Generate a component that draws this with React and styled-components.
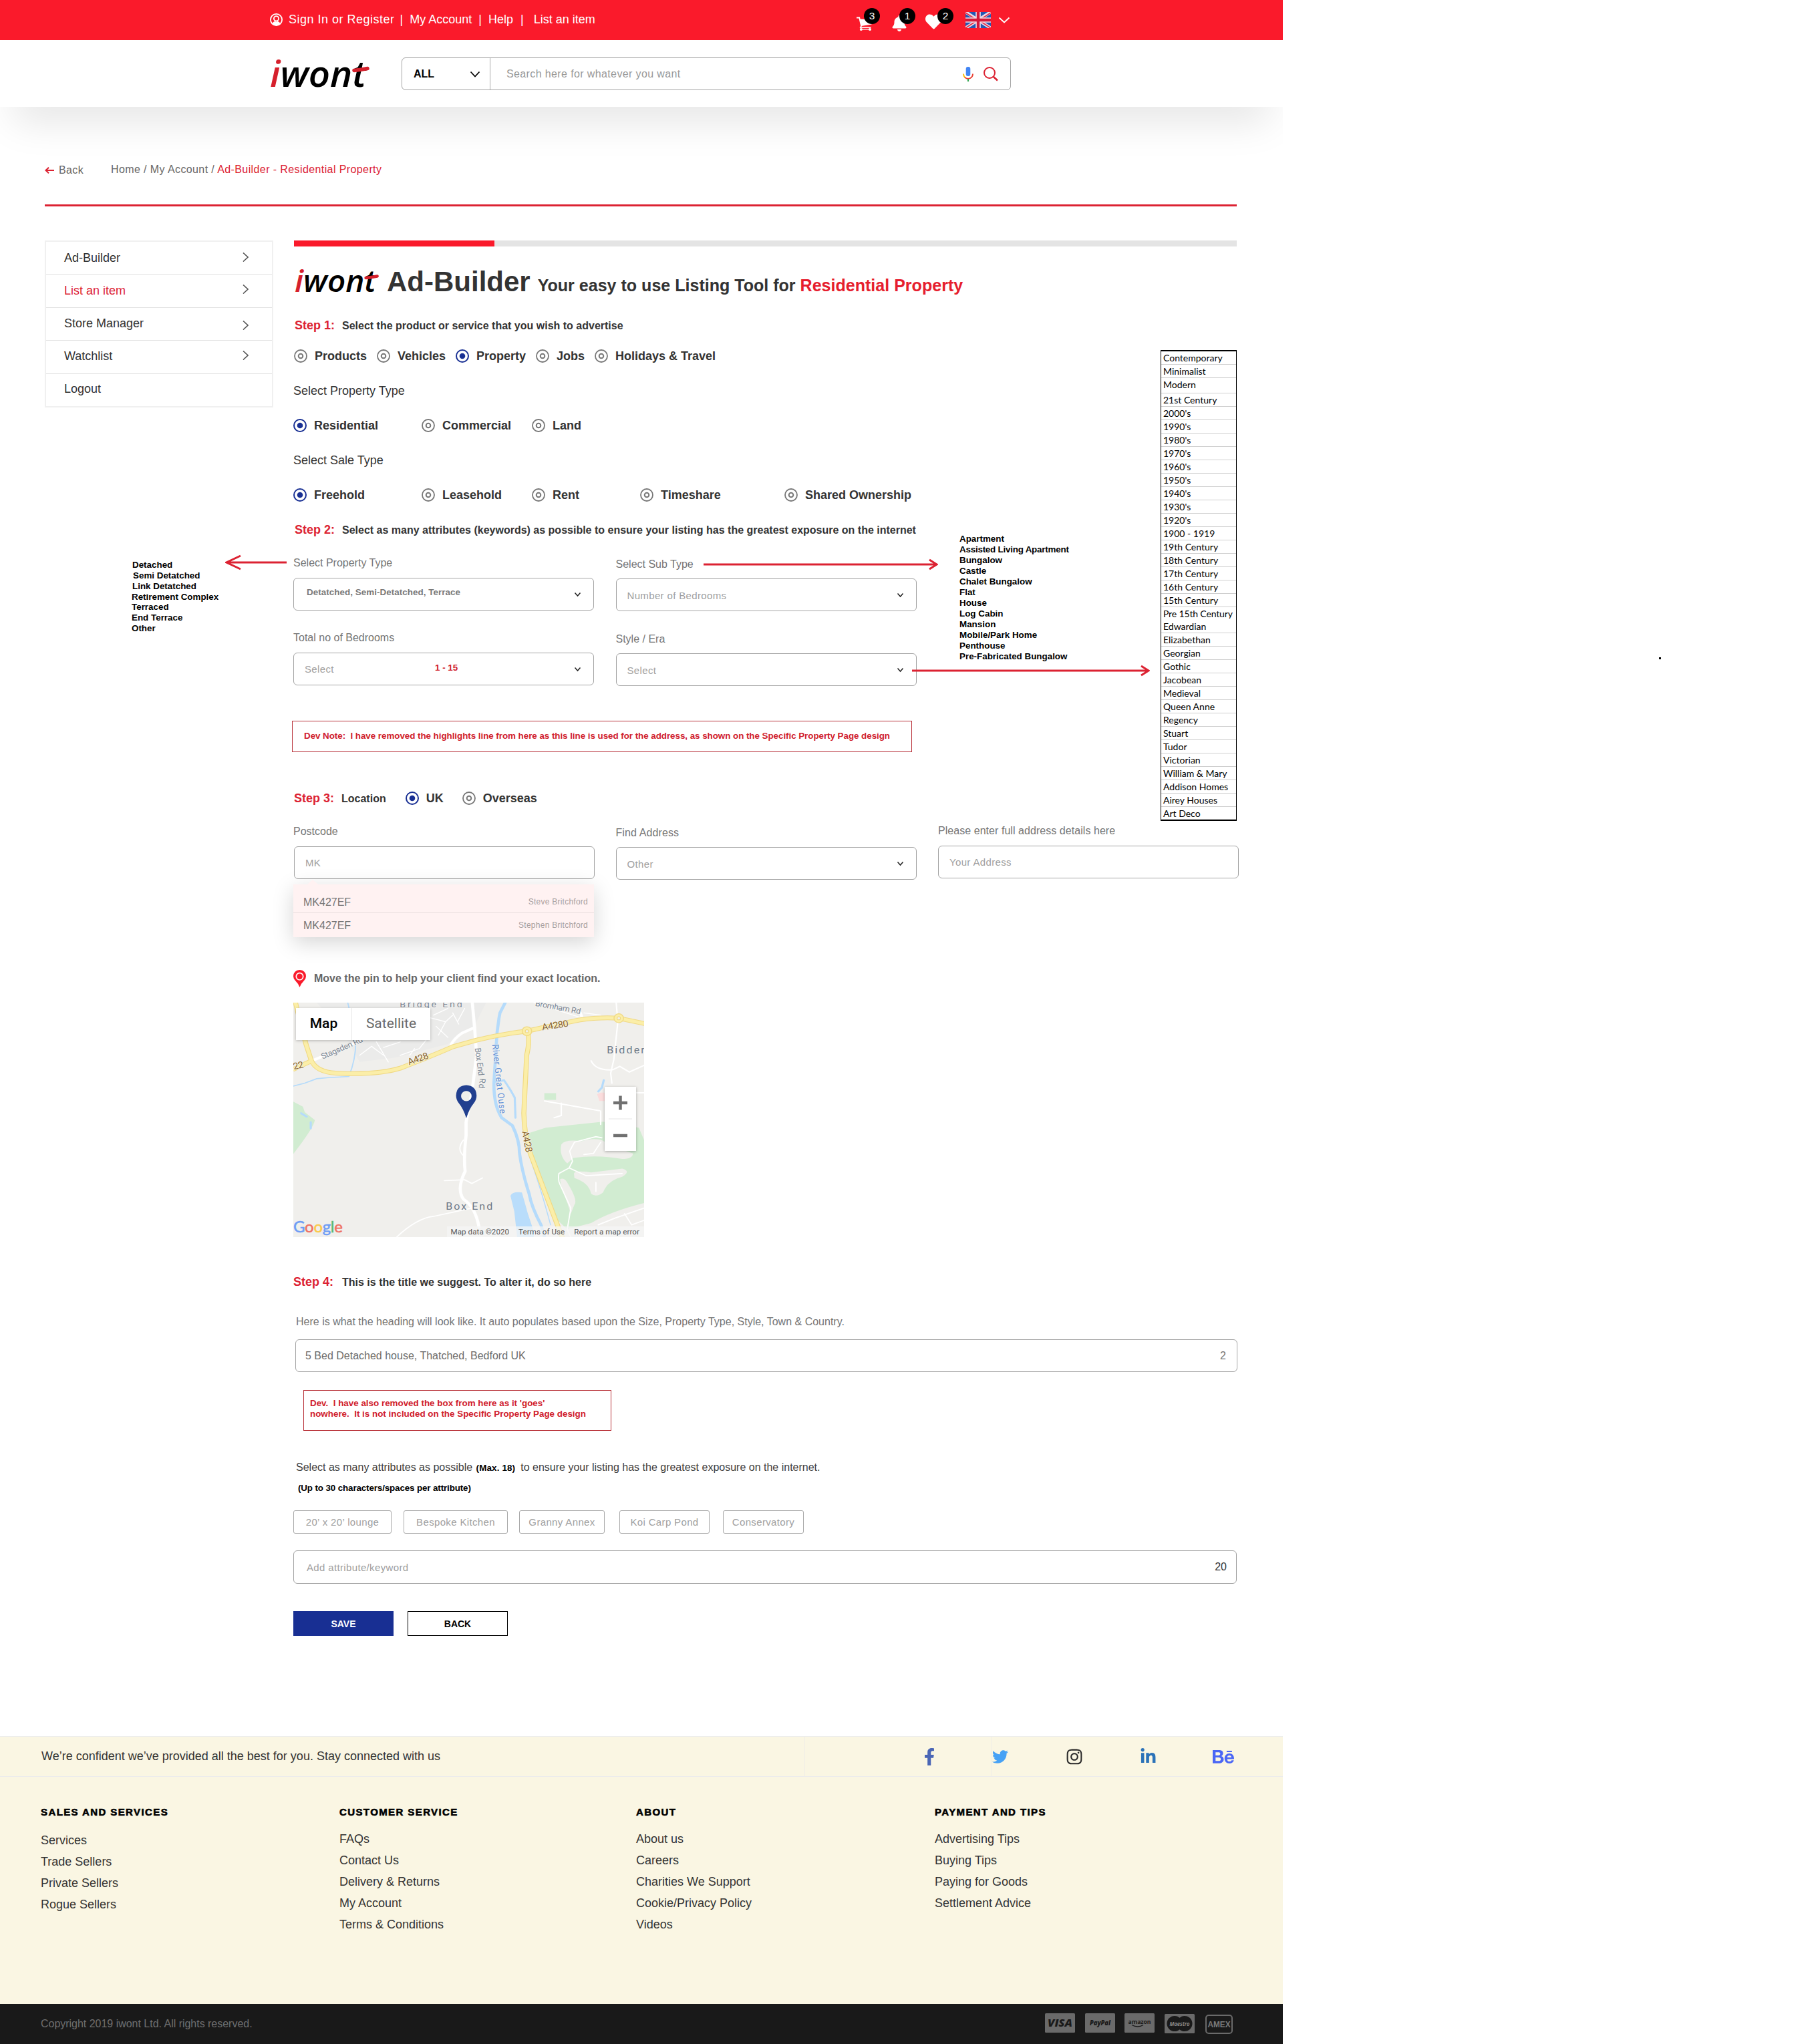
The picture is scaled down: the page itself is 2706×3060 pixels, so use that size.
import React from "react";
import styled, { createGlobalStyle, css } from "styled-components";
import {
  FaBell,
  FaHeart,
  FaFacebookF,
  FaTwitter,
  FaInstagram,
  FaLinkedinIn,
  FaBehance,
} from "react-icons/fa";

const RED = "#dc2232";
const NAVY = "#182f93";

const GlobalStyle = createGlobalStyle`
  * { box-sizing: border-box; }
  body { margin: 0; background: #fff; font-family: "Liberation Sans", Arial, sans-serif; color: #333; }
  h1, h3, p, ul { margin: 0; padding: 0; font-weight: inherit; }
  ul { list-style: none; }
  svg { display: block; flex: none; }
`;

const Canvas = styled.div`
  position: relative;
  width: 2706px;
  height: 3060px;
  overflow: hidden;
`;

const Page = styled.div`
  width: 1920px;
  height: 3060px;
  display: flex;
  flex-direction: column;
  overflow: hidden;
`;

/* ---------- header ---------- */

const TopBar = styled.div`
  height: 60px;
  flex: none;
  padding: 0 409px 0 404px;
  background: #fa1a2b;
  color: #fff;
  font-size: 18px;
  display: flex;
  align-items: center;
`;

const TopLink = styled.span`
  margin-left: ${(p) => p.$gap}px;
  padding-bottom: 2px;
  letter-spacing: ${(p) => p.$track || 0}px;
  white-space: pre;
`;

const UserSlot = styled.span`
  padding-bottom: 2px;
`;

const TopIcons = styled.div`
  margin-left: auto;
  height: 60px;
  display: flex;
  align-items: flex-start;
`;

const IconSlot = styled.div`
  position: relative;
  width: ${(p) => p.$w}px;
  padding-top: ${(p) => p.$top}px;
`;

const Badge = styled.span`
  position: absolute;
  top: 12px;
  left: ${(p) => p.$left}px;
  width: 24px;
  height: 24px;
  border-radius: 50%;
  background: #000;
  color: #fff;
  font-size: 15.5px;
  line-height: 23px;
  text-align: center;
`;

const SearchBar = styled.div`
  height: 100px;
  flex: none;
  padding-left: 402px;
  background: #fff;
  display: flex;
  align-items: flex-start;
  box-shadow: 0 40px 60px -20px rgba(0, 0, 0, 0.115);
`;

const LogoSlot = styled.div`
  width: 199px;
  padding-top: 10px;
`;

const SearchBox = styled.div`
  margin-top: 26px;
  width: 912px;
  height: 49px;
  border: 1px solid #a3a3a3;
  border-radius: 6px;
  display: flex;
  align-items: center;
`;

const SearchScope = styled.div`
  width: 132px;
  height: 100%;
  padding: 0 15px 0 17px;
  border-right: 1px solid #a9a9a9;
  display: flex;
  align-items: center;
  justify-content: space-between;
  font-size: 16px;
  font-weight: bold;
  color: #000;
`;

const SearchHint = styled.span`
  flex: 1;
  padding-left: 24px;
  font-size: 16px;
  letter-spacing: 0.38px;
  color: #999;
`;

const SearchActions = styled.div`
  display: flex;
  align-items: center;
  gap: 15px;
  padding-right: 18px;
`;

/* ---------- breadcrumb ---------- */

const Crumbs = styled.nav`
  margin: 84px 69px 0 67px;
  height: 65px;
  flex: none;
  border-bottom: 3px solid ${RED};
  display: flex;
  align-items: flex-start;
  font-size: 16px;
  line-height: 20px;
  letter-spacing: 0.4px;
  color: #666;
`;

const BackLink = styled.span`
  width: 99px;
  display: flex;
  align-items: center;
  gap: 7px;
  padding-top: 1px;
`;

const Current = styled.span`
  color: ${RED};
`;

/* ---------- body ---------- */

const Body = styled.div`
  margin: 51px 0 0 67px;
  height: 2239px;
  flex: none;
  display: flex;
  gap: 30px;
`;

const Side = styled.aside`
  width: 342px;
  flex: none;
`;

const Menu = styled.ul`
  border: 2px solid #f0f0f0;
  height: 250px;
`;

const MenuItem = styled.li`
  height: ${(p) => p.$h}px;
  border-bottom: ${(p) => (p.$last ? "none" : "1px solid #e2e2e2")};
  padding: ${(p) => p.$pt}px 35px 0 27px;
  display: flex;
  justify-content: space-between;
  align-items: flex-start;
  font-size: 18px;
  line-height: 22px;
  color: ${(p) => (p.$active ? RED : "#333")};
`;

const MenuChevron = styled.span`
  padding-top: ${(p) => p.$pt}px;
`;

const PaintList = styled.ul`
  margin: ${(p) => p.$mt}px 0 0 ${(p) => p.$ml}px;
  font-size: 13.4px;
  font-weight: bold;
  line-height: 16px;
  color: #000;
  white-space: nowrap;
`;

const PaintItem = styled.li`
  padding-left: ${(p) => p.$indent || 0}px;
  height: ${(p) => p.$h || 16}px;
  letter-spacing: ${(p) => p.$track || 0}px;
`;

const Main = styled.main`
  position: relative;
  width: 1415px;
`;

const Progress = styled.div`
  width: 1411px;
  margin-left: 1px;
  height: 9px;
  background: #e4e4e4;
`;

const ProgressFill = styled.div`
  width: 300px;
  height: 9px;
  background: #fa1a2b;
`;

const TitleRow = styled.div`
  margin: 20px 0 0 0;
  height: 65px;
  display: flex;
  align-items: center;
`;

const TitleLogo = styled.div`
  width: 140px;
  padding-bottom: 6px;
`;

const Title = styled.h1`
  font-size: 42px;
  line-height: 65px;
  font-weight: bold;
  white-space: pre;
`;

const Tagline = styled.span`
  font-size: 25.05px;
  line-height: 1;
  margin-left: 11px;
`;

const RedText = styled.span`
  color: #e61e2e;
`;

const StepLine = styled.div`
  margin-top: ${(p) => p.$mt || 0}px;
  margin-left: ${(p) => p.$ml || 0}px;
  height: 26px;
  display: flex;
  align-items: baseline;
  font-size: 18px;
  line-height: 26px;
  font-weight: bold;
  white-space: nowrap;
  color: ${RED};
`;

const StepText = styled.span`
  margin-left: ${(p) => p.$ml || 11}px;
  font-size: 16px;
  color: #333;
`;

const LocationStep = styled.div`
  margin: 56px 0 0 1px;
  display: flex;
`;

const Annotated = styled.div`
  display: flex;
  align-items: flex-start;
  width: 1412px;
  margin-top: 20px;
  height: 709px;
`;

const FormCol = styled.div`
  width: 933px;
  flex: none;
`;

const RadioRow = styled.div`
  margin-top: ${(p) => p.$mt || 0}px;
  margin-left: ${(p) => p.$ml || 0}px;
  height: 26px;
  display: flex;
  align-items: center;
`;

const RadioLabel = styled.label`
  width: ${(p) => (p.$w ? p.$w + "px" : "auto")};
  display: flex;
  align-items: center;
  gap: 11px;
  font-size: 18px;
  line-height: 26px;
  font-weight: bold;
  white-space: nowrap;
`;

const GroupLabel = styled.p`
  margin-top: 26px;
  font-size: 18px;
  line-height: 26px;
`;

const Fields = styled.div`
  margin-top: ${(p) => p.$mt}px;
  display: grid;
  grid-template-columns: repeat(${(p) => p.$cols}, 450px);
  column-gap: 32.5px;
`;

const Field = styled.div`
  position: relative;
  padding-top: ${(p) => p.$drop || 0}px;
  margin-top: ${(p) => p.$lift || 0}px;
`;

const FieldLabel = styled.p`
  font-size: 16px;
  line-height: 20px;
  color: #757575;
  letter-spacing: ${(p) => p.$track || 0}px;
`;

const Control = styled.div`
  position: relative;
  margin-top: ${(p) => p.$mt ?? 12}px;
  margin-left: ${(p) => p.$ml || 0}px;
  width: ${(p) => (p.$w ? p.$w + "px" : "auto")};
  height: ${(p) => p.$h || 49}px;
  padding: 0 ${(p) => p.$pr || 19}px 0 ${(p) => p.$pl || 16}px;
  border: 1px solid #a3a3a3;
  border-radius: 6px;
  display: flex;
  align-items: center;
  justify-content: space-between;
`;

const Hint = styled.span`
  font-size: 15px;
  letter-spacing: 0.35px;
  color: #a0a0a0;
  padding-top: ${(p) => p.$pt || 0}px;
`;

const Chosen = styled.span`
  font-size: 13.4px;
  font-weight: bold;
  letter-spacing: 0.05px;
  color: #7a7a7a;
  padding: 0 0 7px 3px;
`;

const RangeNote = styled.span`
  position: absolute;
  left: 211px;
  top: 14px;
  font-size: 13.4px;
  font-weight: bold;
  line-height: 16px;
  color: #d0202c;
`;

const DevNote = styled.div`
  margin: ${(p) => p.$mt}px 0 0 ${(p) => p.$ml}px;
  width: ${(p) => p.$w}px;
  height: ${(p) => p.$h}px;
  padding: ${(p) => p.$pad};
  border: 1px solid #b83038;
  font-size: 13.4px;
  font-weight: bold;
  line-height: 16px;
  letter-spacing: ${(p) => p.$track || 0}px;
  color: #d0202c;
  white-space: pre;
`;

const EraTable = styled.ul`
  margin: 4px 0 0 auto;
  width: 114px;
  border: 2px solid #000;
  border-width: 2px 1px 2px 1px;
  font-family: Lato, "Noto Sans", sans-serif;
  font-size: 14px;
  color: #000;
  white-space: nowrap;
`;

const EraRow = styled.li`
  height: ${(p) => p.$h}px;
  padding: 1px 0 0 3px;
  line-height: 18px;
  letter-spacing: ${(p) => (p.$plain ? -0.15 : 0)}px;
  ${(p) =>
    !p.$plain &&
    css`
      border-bottom: 1px solid #cfcfcf;
    `}
`;

const ArrowSvg = styled.svg`
  position: absolute;
  left: ${(p) => p.$x}px;
  top: ${(p) => p.$y}px;
`;

const Suggestions = styled.ul`
  position: absolute;
  top: 89px;
  left: 0;
  width: 450px;
  height: 79px;
  background: #fff2f2;
  box-shadow: 0 8px 32px rgba(0, 0, 0, 0.17);
  &::before {
    content: "";
    position: absolute;
    left: 21px;
    top: -7px;
    border: 8px solid transparent;
    border-top: 0;
    border-bottom: 7px solid #fff2f2;
  }
`;

const Suggestion = styled.li`
  height: ${(p) => p.$h}px;
  padding: ${(p) => p.$pt}px 9px 0 15px;
  border-bottom: ${(p) => (p.$line ? "1px solid #eadede" : "none")};
  display: flex;
  justify-content: space-between;
  font-size: 16px;
  line-height: 20px;
  color: #757575;
`;

const Owner = styled.span`
  font-size: 12px;
  letter-spacing: 0.25px;
  line-height: 19px;
  color: #a8a0a0;
`;

const PinRow = styled.div`
  margin-top: 135px;
  height: 26px;
  display: flex;
  align-items: center;
  gap: 12px;
  font-size: 16px;
  font-weight: bold;
  color: #666;
`;

const MapFrame = styled.div`
  position: relative;
  margin-top: 23px;
  width: 525px;
  height: 351px;
  overflow: hidden;
  font-family: Roboto, sans-serif;
`;

const MapTabs = styled.div`
  position: absolute;
  left: 4px;
  top: 8px;
  height: 48px;
  display: flex;
  background: #fff;
  box-shadow: 0 1px 4px rgba(0, 0, 0, 0.25);
`;

const MapTab = styled.span`
  width: ${(p) => p.$w}px;
  text-align: center;
  font-size: 21px;
  line-height: 47px;
  font-weight: ${(p) => (p.$on ? 500 : 400)};
  color: ${(p) => (p.$on ? "#000" : "#6a6a6a")};
  border-left: ${(p) => (p.$on ? "none" : "1px solid #e8e8e8")};
`;

const ZoomBox = styled.div`
  position: absolute;
  left: 466px;
  top: 126px;
  width: 47px;
  height: 96px;
  background: #fff;
  box-shadow: 0 1px 4px rgba(0, 0, 0, 0.3);
`;

const MapCredits = styled.div`
  position: absolute;
  right: 0;
  bottom: 0;
  height: 16px;
  padding: 0 7px 0 6px;
  display: flex;
  gap: 14px;
  background: rgba(245, 245, 245, 0.75);
  font-size: 11.6px;
  line-height: 16px;
  letter-spacing: 0.05px;
  color: #555;
  white-space: nowrap;
`;

const GoogleMark = styled.div`
  position: absolute;
  left: 0;
  bottom: 1px;
  font-family: Lato, sans-serif;
  font-size: 24px;
  line-height: 30px;
  letter-spacing: -0.3px;
`;

const GoogleLetter = styled.span`
  color: ${(p) => p.$c};
  -webkit-text-stroke: 0.5px ${(p) => p.$c};
`;

const Paragraph = styled.p`
  margin: ${(p) => p.$mt}px 0 0 4px;
  font-size: 16px;
  line-height: 20px;
  color: ${(p) => p.$c};
  white-space: nowrap;
  height: 20px;
`;

const PaintText = styled.span`
  font-size: 13.4px;
  font-weight: bold;
  line-height: 1;
  letter-spacing: 0.15px;
  color: #000;
  margin: 0 8px 0 1px;
`;

const LimitNote = styled.p`
  margin: 13px 0 0 7px;
  font-size: 13.4px;
  line-height: 16px;
  font-weight: bold;
  letter-spacing: -0.13px;
  color: #000;
`;

const Filled = styled.span`
  font-size: 16px;
  color: #6c6c6c;
`;

const Counter = styled.span`
  font-size: 16px;
  color: ${(p) => p.$c};
`;

const Chips = styled.div`
  margin-top: 25px;
  display: flex;
`;

const Chip = styled.span`
  width: ${(p) => p.$w}px;
  height: 35px;
  margin-right: ${(p) => p.$mr}px;
  border: 1px solid #a9a9a9;
  border-radius: 3px;
  font-size: 15px;
  letter-spacing: 0.35px;
  line-height: 34px;
  text-align: center;
  color: #a0a0a0;
`;

const Actions = styled.div`
  margin-top: 41px;
  display: flex;
  gap: 21px;
`;

const Button = styled.button`
  width: 150px;
  height: 37px;
  padding: 1px 0 0;
  border: ${(p) => (p.$primary ? "none" : "1px solid #000")};
  background: ${(p) => (p.$primary ? NAVY : "#fff")};
  color: ${(p) => (p.$primary ? "#fff" : "#000")};
  font: bold 14px "Liberation Sans", Arial, sans-serif;
`;

/* ---------- footer ---------- */

const Footer = styled.footer`
  height: 401px;
  flex: none;
  background: #faf6e3;
  border-top: 1px solid #ececec;
`;

const SocialBar = styled.div`
  height: 60px;
  border-bottom: 1px solid #ececec;
  display: grid;
  grid-template-columns: 1204px 279px 1fr;
`;

const SocialCell = styled.div`
  padding-left: ${(p) => p.$pl}px;
  border-left: ${(p) => (p.$line ? "1px solid #f0eee6" : "none")};
  display: flex;
  align-items: center;
  font-size: 18px;
`;

const SocialIcon = styled.span`
  width: ${(p) => p.$w}px;
  color: ${(p) => p.$c};
`;

const FooterCols = styled.div`
  display: flex;
  padding: 43px 0 0 61px;
`;

const FooterCol = styled.div`
  width: ${(p) => p.$w}px;
`;

const FooterHeading = styled.h3`
  font-size: 15px;
  font-weight: bold;
  line-height: 20px;
  letter-spacing: 1.4px;
  color: #000;
  -webkit-text-stroke: 0.6px #000;
`;

const FooterLinks = styled.ul`
  margin-top: ${(p) => p.$mt}px;
  font-size: 18px;
  line-height: 32px;
`;

const BottomBar = styled.div`
  height: 60px;
  flex: none;
  padding: 9px 75px 0 61px;
  background: #191919;
  display: flex;
  justify-content: space-between;
  align-items: center;
  font-size: 16px;
  letter-spacing: -0.02px;
  color: #6f6f6f;
`;

const Copyright = styled.span`
  padding-bottom: 9px;
`;

const Cards = styled.div`
  display: flex;
  align-items: flex-start;
  padding-bottom: 11px;
`;

const CardSvg = styled.svg`
  margin: ${(p) => p.$mt || 0}px 0 0 ${(p) => p.$ml || 0}px;
`;

const StrayDot = styled.span`
  position: absolute;
  left: 2483px;
  top: 984px;
  width: 3px;
  height: 3px;
  background: #000;
`;

/* ---------- drawings ---------- */

function Logo({ width, height }) {
  return (
    <svg width={width} height={height} viewBox="0 -12 154 78" overflow="visible">
      <text
        x="2"
        y="48"
        fontFamily="'Open Sans', sans-serif"
        fontStyle="italic"
        fontWeight="600"
        fontSize="54"
        textLength="144"
        lengthAdjust="spacingAndGlyphs"
      >
        <tspan fill="#d6202c">i</tspan>
        <tspan fill="#000">wont</tspan>
      </text>
      <path d="M128 23.5Q138 22.500 148 20.500" fill="none" stroke="#d6202c" strokeWidth="5.500" strokeLinecap="round" />
    </svg>
  );
}

function UserGlyph() {
  return (
    <svg width="19" height="19" viewBox="0 0 19 19">
      <circle cx="9.500" cy="9.500" r="8.600" fill="none" stroke="#fff" strokeWidth="1.800" />
      <path d="M3.500 15.500Q4.500 12.500 7.500 11.800Q9.500 13 11.500 11.800Q14.500 12.500 15.500 15.500Q9.500 21 3.500 15.500Z" fill="#fff" />
      <circle cx="9.500" cy="7.800" r="3.600" fill="none" stroke="#fff" strokeWidth="1.800" />
    </svg>
  );
}

function CartGlyph() {
  return (
    <svg width="26" height="22" viewBox="0 0 26 22" fill="none" stroke="#fff">
      <path d="M0 1.500H4.200L7 13.500H6" strokeWidth="1.800" />
      <path d="M4.500 3.500L24.500 4.500L22.500 11.500L7 14Z" fill="#fff" stroke="none" />
      <path d="M7 13.500L5.800 16.200H21.500" strokeWidth="1.600" />
      <path d="M5.500 19H21" strokeWidth="1.200" />
      <circle cx="6.800" cy="19" r="2" fill="#fff" stroke="none" />
      <circle cx="20" cy="19" r="2" fill="#fff" stroke="none" />
    </svg>
  );
}

function Chevron({ w = 9, h = 5.5, color = "#222", stroke = 1.5 }) {
  return (
    <svg width={w} height={h} viewBox={`0 0 ${w} ${h}`} fill="none" overflow="visible">
      <path d={`M0.5 0.5L${w / 2} ${h - 0.5}L${w - 0.5} 0.5`} stroke={color} strokeWidth={stroke} />
    </svg>
  );
}

function RadioDot({ on }) {
  return on ? (
    <svg width="20" height="20" viewBox="0 0 20 20">
      <circle cx="10" cy="10" r="9" fill="#fff" stroke={NAVY} strokeWidth="2" />
      <circle cx="10" cy="10" r="4.300" fill={NAVY} />
    </svg>
  ) : (
    <svg width="20" height="20" viewBox="0 0 20 20" fill="none" stroke="#777">
      <circle cx="10" cy="10" r="9" strokeWidth="1.800" />
      <circle cx="10" cy="10" r="3.300" strokeWidth="2" />
    </svg>
  );
}

function Radio({ label, on, w }) {
  return (
    <RadioLabel $w={w}>
      <RadioDot on={on} />
      {label}
    </RadioLabel>
  );
}

function Flag() {
  return (
    <svg width="38" height="24" viewBox="0 0 38 24">
      <rect width="38" height="24" fill="#2458b4" />
      <path d="M0 0L38 24M38 0L0 24" stroke="#f0dbe4" strokeWidth="4.800" />
      <path d="M0 1L17 12M38 1L21 12M0 24L17 13M38 24L21 13" stroke="#e0304a" strokeWidth="1.700" />
      <path d="M19 0V24M0 12H38" stroke="#f0dbe4" strokeWidth="7.600" />
      <path d="M19 0V24M0 12H38" stroke="#d5193a" strokeWidth="4.400" />
    </svg>
  );
}

function Mic() {
  return (
    <svg width="16" height="22" viewBox="0 0 16 22" fill="none">
      <rect x="4.700" y="0" width="6.600" height="14" rx="3" fill="#4285f4" />
      <path d="M1 10.500Q1 14 3.200 16" stroke="#fbbc05" strokeWidth="1.900" />
      <path d="M3 15.800Q8 20 13 15.800Q15 14 15 10.500" stroke="#ea4335" strokeWidth="1.900" />
      <path d="M8 18V22" stroke="#34a853" strokeWidth="2.200" />
    </svg>
  );
}

function SearchGlyph() {
  return (
    <svg width="22" height="22" viewBox="0 0 22 22" fill="none" stroke={RED}>
      <circle cx="9" cy="9" r="8" strokeWidth="2" />
      <path d="M14.500 14.500L21 20.500" strokeWidth="2.600" />
    </svg>
  );
}

function Arrow({ x, y, length, left }) {
  return (
    <ArrowSvg $x={x} $y={y} width={length} height="24" viewBox={`0 0 ${length} 24`} fill="none" stroke="#dc2232" strokeWidth="3">
      {left ? (
        <path d={`M${length} 12H2M23 2L2 12L23 22`} />
      ) : (
        <path d={`M0 12H${length - 2}M${length - 13} 5L${length - 2} 12L${length - 13} 19`} />
      )}
    </ArrowSvg>
  );
}

function LocationMap() {
  const road = { fill: "none", stroke: "#fff", strokeLinecap: "round" };
  const water = { fill: "none", stroke: "#b5dbfb" };
  const highways =
    "M60 60L105 250L128 325Q150 375 230 380Q400 390 500 358Q640 300 720 262L820 232Q920 205 1030 192Q1140 165 1250 142Q1340 128 1416 134L1524 158M50 364L128 325M1033 192Q1045 230 1030 300L1018 560Q1020 660 1045 740L1162 1070L1180 1118";
  const labels = [
    [498, 86, 262, 40, "#7a8594", "Bridge End"],
    [1366, 291, 158, 45, "#6b7786", "Bidder"],
    [691, 992, 196, 45, "#6b7786", "Box End"],
  ];
  return (
    <svg width="525" height="351" viewBox="52 64 1470 1051" preserveAspectRatio="none">
      <rect x="52" y="64" width="1470" height="1051" fill="#f0efec" />
      <path d="M150 64H860L810 170L700 250L480 310L330 330L250 180Z" fill="#ebebea" />
      <path d="M52 508L92 530L100 555L142 590Q140 620 52 742Z" fill="#d1ecd1" />
      <path d="M1104 470H1153V500H1104Z" fill="#d1ecd1" />
      <path
        d="M1035 650L1110 625L1350 598L1500 625L1522 680V962Q1380 1000 1300 1052L1200 1080L1160 1040L1050 740Z"
        fill="#d1ecd1"
      />
      <path d="M1175 700Q1190 675 1260 685Q1340 660 1370 700L1475 740Q1475 765 1430 765Q1330 745 1225 760L1200 785Q1165 750 1175 700Z" fill="#f0efec" />
      <path d="M1228 830Q1230 815 1300 825L1430 808Q1470 820 1430 845Q1370 860 1350 915Q1320 940 1300 920Q1290 870 1230 850Z" fill="#f0efec" />
      <path d="M1170 855Q1190 845 1205 880Q1245 950 1230 970L1215 1010L1200 960Q1170 880 1170 855Z" fill="#f0efec" />
      <path d="M1325 475Q1340 462 1360 470V505H1335Z" fill="#fbdcdc" />
      <g {...water} strokeLinecap="round">
        <path d="M280 64Q300 150 312 210Q320 300 285 395L200 400L150 405L100 425L52 438" strokeWidth="5" />
        <path d="M940 64L918 110Q905 180 902 260L893 420Q890 520 925 580L970 615Q1000 680 1000 740Q1010 820 1040 920Q1050 980 1090 1060L1105 1115" strokeWidth="13" />
        <path d="M893 420L935 412Q960 450 980 490L983 580" strokeWidth="9" />
        <path d="M1050 780Q1090 900 1130 1060" strokeWidth="4" />
        <path d="M85 560L108 575M125 600V628M1353 412L1345 445L1330 462" strokeWidth="9" />
      </g>
      <path d="M962 930Q970 910 1010 915Q1022 960 1035 1010L1060 1090L1060 1115H990L978 1000Z" fill="#b9ddfb" />
      <g {...road}>
        <path d="M1105 505L1335 548M1175 515V570L1145 580M1300 325Q1320 370 1390 365L1420 350L1460 375L1522 345M1387 425L1382 380L1395 320L1412 150L1405 64M1340 550V610M1490 468H1522" strokeWidth="6" />
        <path d="M1345 670L1320 665L1230 690L1210 730L1222 775L1208 805L1165 830Q1160 860 1170 880L1215 985L1200 1080L1215 1115M1208 805L1280 840L1430 830M1320 870V910M1270 745L1310 740L1340 690" strokeWidth="5" />
        <path d="M485 1115Q570 1030 640 1022L800 985M685 862L770 858L800 875L845 850M765 680Q735 720 765 750M1330 1060L1400 1030L1522 985M1440 1010L1470 1060L1522 1040" strokeWidth="5" />
        <path d="M802 64L812 180L820 300L800 470L776 600V660Q765 760 772 820Q735 900 765 945Q815 980 830 1070" strokeWidth="13" />
        <path d="M812 175L760 200Q725 225 712 255M130 325L330 235M1262 130L1255 110" strokeWidth="12" />
        <path d="M400 240L450 330M430 265L500 240M330 300L380 260L430 300M500 300L580 270L610 230M540 300L560 270M620 130L690 150L720 120M650 170L700 220M690 150L660 210M720 110L745 160M770 90L740 150M640 120L700 90M1270 110L1340 120M1255 130L1060 64" strokeWidth="4" />
      </g>
      <path d={highways} fill="none" stroke="#f0d983" strokeWidth="21" />
      <path d={highways} fill="none" stroke="#fbeea8" strokeWidth="15" />
      <circle cx="1031" cy="192" r="20" fill="#fbeea8" stroke="#f0d983" strokeWidth="4" />
      <circle cx="1031" cy="192" r="7" fill="#f0efec" stroke="#f0d983" strokeWidth="3" />
      <circle cx="1416" cy="134" r="20" fill="#fbeea8" stroke="#f0d983" strokeWidth="4" />
      <circle cx="1416" cy="134" r="7" fill="#f0efec" stroke="#f0d983" strokeWidth="3" />
      <g fontFamily="Roboto, sans-serif" stroke="#f6f5f2" strokeWidth="4" paintOrder="stroke">
        {labels.map(([x, y, len, size, color, text]) => (
          <text key={text} x={x} y={y} textLength={len} fontSize={size} fill={color}>
            {text}
          </text>
        ))}
        <g fill="#8a6428" fontSize="41">
          <text transform="translate(537 344) rotate(-20)" textLength="90">A428</text>
          <text transform="translate(1096 188) rotate(-9)" textLength="112">A4280</text>
          <text transform="translate(1010 642) rotate(80)" textLength="96">A428</text>
          <text transform="translate(54 364) rotate(-12)" textLength="44">22</text>
        </g>
        <g fill="#7a8594" fontSize="35">
          <text transform="translate(175 318) rotate(-25)" textLength="188">Stagsden Rd</text>
          <text transform="translate(1064 78) rotate(11)" textLength="194">Bromham Rd</text>
          <text transform="translate(813 268) rotate(83)" textLength="125">Box End</text>
          <text transform="translate(834 402) rotate(97)" textLength="45">Rd</text>
        </g>
        <text transform="translate(885 252) rotate(84)" textLength="312" fontSize="38" fill="#5f8fd6" strokeWidth="3">
          River Great Ouse
        </text>
      </g>
      <path
        d="M777 582Q765 540 745 514Q734 498 734 480Q736 436 777 434Q818 436 820 480Q820 498 809 514Q789 540 777 582ZM777 460A22 23 0 1 0 777.1 460Z"
        fill="#213f8f"
        fillRule="evenodd"
      />
    </svg>
  );
}

function PinGlyph() {
  return (
    <svg width="19" height="26" viewBox="0 0 19 26">
      <path d="M9.500 26Q7.500 20.500 2.500 15.500Q0 12.500 0 9.500Q.5 .5 9.500 0Q18.500 .5 19 9.500Q19 12.500 16.500 15.500Q11.500 20.500 9.500 26Z" fill="#fa1a2b" />
      <circle cx="9.500" cy="9.800" r="5.200" fill="none" stroke="#fff" strokeWidth="1.700" />
    </svg>
  );
}

function CardTile({ label, size, len, smile, ml }) {
  return (
    <CardSvg $ml={ml} width="45" height="29" viewBox="0 0 45 29">
      <rect width="45" height="29" rx="1.500" fill="#6a6a6a" />
      <text
        x={22.5}
        y={smile ? 15.5 : 14 + size * 0.37}
        textAnchor="middle"
        textLength={len}
        lengthAdjust="spacingAndGlyphs"
        fontFamily="'Open Sans', sans-serif"
        fontWeight={smile ? 700 : 800}
        fontStyle={smile ? "normal" : "italic"}
        fontSize={size}
        fill="#191919"
      >
        {label}
      </text>
      {smile && <path d="M11 17.500Q20 22.500 28 17.500" stroke="#191919" strokeWidth="1.300" fill="none" />}
    </CardSvg>
  );
}

/* ---------- data ---------- */

const menu = [
  { label: "Ad-Builder", h: 49, pt: 12.5, chev: 4 },
  { label: "List an item", h: 50, pt: 13, chev: 3, active: true },
  { label: "Store Manager", h: 49, pt: 12, chev: 8 },
  { label: "Watchlist", h: 50, pt: 12, chev: 4 },
  { label: "Logout", h: 48, pt: 11, last: true },
];

const detachedTypes = [
  ["Detached", 1],
  ["Semi Detatched", 2],
  ["Link Detatched", 1],
  ["Retirement Complex", 0, 15],
  ["Terraced", 0],
  ["End Terrace", 0],
  ["Other", 0],
];

const subTypes = [
  ["Apartment"],
  ["Assisted Living Apartment", -0.22],
  ["Bungalow"],
  ["Castle"],
  ["Chalet Bungalow"],
  ["Flat"],
  ["House"],
  ["Log Cabin"],
  ["Mansion"],
  ["Mobile/Park Home"],
  ["Penthouse"],
  ["Pre-Fabricated Bungalow"],
];

const eras = [
  ["Contemporary", 20],
  ["Minimalist", 20],
  ["Modern", 23],
  ...[
    "21st Century",
    "2000's",
    "1990's",
    "1980's",
    "1970's",
    "1960's",
    "1950's",
    "1940's",
    "1930's",
    "1920's",
    "1900 - 1919",
    "19th Century",
    "18th Century",
    "17th Century",
    "16th Century",
    "15th Century",
  ].map((t) => [t, 20]),
  ["Pre 15th Century", 19, true],
  ...[
    "Edwardian",
    "Elizabethan",
    "Georgian",
    "Gothic",
    "Jacobean",
    "Medieval",
    "Queen Anne",
    "Regency",
    "Stuart",
    "Tudor",
    "Victorian",
    "William & Mary",
    "Addison Homes",
    "Airey Houses",
  ].map((t) => [t, 20]),
  ["Art Deco", 19],
];

const footerCols = [
  { title: "SALES AND SERVICES", w: 447, mt: 16, links: ["Services", "Trade Sellers", "Private Sellers", "Rogue Sellers"] },
  { title: "CUSTOMER SERVICE", w: 444, mt: 14, links: ["FAQs", "Contact Us", "Delivery & Returns", "My Account", "Terms & Conditions"] },
  { title: "ABOUT", w: 447, mt: 14, links: ["About us", "Careers", "Charities We Support", "Cookie/Privacy Policy", "Videos"] },
  { title: "PAYMENT AND TIPS", w: 300, mt: 14, links: ["Advertising Tips", "Buying Tips", "Paying for Goods", "Settlement Advice"] },
];

const google = [
  ["G", "#6d9cf5"],
  ["o", "#ee6f63"],
  ["o", "#fbc94a"],
  ["g", "#6d9cf5"],
  ["l", "#5bb974"],
  ["e", "#ee6f63"],
];

/* ---------- sections ---------- */

function Header() {
  return (
    <>
      <TopBar>
        <UserSlot>
          <UserGlyph />
        </UserSlot>
        <TopLink $gap={9} $track={0.5}>Sign In or Register</TopLink>
        <TopLink $gap={8}>|</TopLink>
        <TopLink $gap={10}>My Account</TopLink>
        <TopLink $gap={10}>|</TopLink>
        <TopLink $gap={10}>Help</TopLink>
        <TopLink $gap={11}>|</TopLink>
        <TopLink $gap={15}>List an item</TopLink>
        <TopIcons>
          <IconSlot $w={52} $top={25}>
            <CartGlyph />
            <Badge $left={11}>3</Badge>
          </IconSlot>
          <IconSlot $w={51} $top={23}>
            <FaBell size={24} />
            <Badge $left={12}>1</Badge>
          </IconSlot>
          <IconSlot $w={60} $top={20}>
            <FaHeart size={25} />
            <Badge $left={18}>2</Badge>
          </IconSlot>
          <IconSlot $w={50} $top={18}>
            <Flag />
          </IconSlot>
          <IconSlot $w={16} $top={26}>
            <Chevron w={16} h={8} color="#fff" stroke={1.8} />
          </IconSlot>
        </TopIcons>
      </TopBar>
      <SearchBar>
        <LogoSlot>
          <Logo width={154} height={78} />
        </LogoSlot>
        <SearchBox>
          <SearchScope>
            ALL
            <Chevron w={14} h={8} color="#000" stroke={1.8} />
          </SearchScope>
          <SearchHint>Search here for whatever you want</SearchHint>
          <SearchActions>
            <Mic />
            <SearchGlyph />
          </SearchActions>
        </SearchBox>
      </SearchBar>
    </>
  );
}

function Sidebar() {
  return (
    <Side>
      <Menu>
        {menu.map((m) => (
          <MenuItem key={m.label} $h={m.h} $pt={m.pt} $active={m.active} $last={m.last}>
            {m.label}
            {!m.last && (
              <MenuChevron $pt={m.chev - 1}>
                <svg width="9" height="14" viewBox="0 0 9 14" fill="none" stroke="#555" strokeWidth="1.600">
                  <path d="M1 .5L8 7L1 13.500" />
                </svg>
              </MenuChevron>
            )}
          </MenuItem>
        ))}
      </Menu>
      <PaintList $mt={228} $ml={130}>
        {detachedTypes.map(([t, indent, h]) => (
          <PaintItem key={t} $indent={indent} $h={h}>{t}</PaintItem>
        ))}
      </PaintList>
    </Side>
  );
}

function PropertyDetails() {
  return (
    <Annotated>
      <FormCol>
        <RadioRow $ml={1}>
          <Radio label="Products" w={124} />
          <Radio label="Vehicles" w={118} />
          <Radio label="Property" w={120} on />
          <Radio label="Jobs" w={88} />
          <Radio label="Holidays & Travel" />
        </RadioRow>
        <GroupLabel>Select Property Type</GroupLabel>
        <RadioRow $mt={26}>
          <Radio label="Residential" w={192} on />
          <Radio label="Commercial" w={165} />
          <Radio label="Land" />
        </RadioRow>
        <GroupLabel>Select Sale Type</GroupLabel>
        <RadioRow $mt={26}>
          <Radio label="Freehold" w={192} on />
          <Radio label="Leasehold" w={165} />
          <Radio label="Rent" w={162} />
          <Radio label="Timeshare" w={216} />
          <Radio label="Shared Ownership" />
        </RadioRow>
        <StepLine $mt={26} $ml={2}>
          Step 2:
          <StepText>
            Select as many attributes (keywords) as possible to ensure your listing has the greatest exposure on the internet
          </StepText>
        </StepLine>
        <Fields $cols={2} $mt={27}>
          <Field>
            <FieldLabel>Select Property Type</FieldLabel>
            <Control>
              <Chosen>Detatched, Semi-Detatched, Terrace</Chosen>
              <Chevron />
            </Control>
          </Field>
          <Field $drop={2}>
            <FieldLabel>Select Sub Type</FieldLabel>
            <Control $mt={11}>
              <Hint $pt={2}>Number of Bedrooms</Hint>
              <Chevron />
            </Control>
          </Field>
        </Fields>
        <Fields $cols={2} $mt={30}>
          <Field>
            <FieldLabel>Total no of Bedrooms</FieldLabel>
            <Control>
              <Hint>Select</Hint>
              <RangeNote>1 - 15</RangeNote>
              <Chevron />
            </Control>
          </Field>
          <Field $drop={2}>
            <FieldLabel>Style / Era</FieldLabel>
            <Control $mt={11}>
              <Hint $pt={2}>Select</Hint>
              <Chevron />
            </Control>
          </Field>
        </Fields>
        <DevNote $mt={52} $ml={-2} $w={928} $h={47} $pad="14px 0 0 17px" $track={-0.045}>
          {"Dev Note:  I have removed the highlights line from here as this line is used for the address, as shown on the Specific Property Page design"}
        </DevNote>
        <LocationStep>
          <StepLine>
            Step 3:
            <StepText>Location</StepText>
          </StepLine>
          <RadioRow $ml={29}>
            <Radio label="UK" w={85} on />
            <Radio label="Overseas" />
          </RadioRow>
        </LocationStep>
      </FormCol>
      <PaintList $mt={279} $ml={64}>
        {subTypes.map(([t, track]) => (
          <PaintItem key={t} $track={track}>{t}</PaintItem>
        ))}
      </PaintList>
      <EraTable>
        {eras.map(([t, h, plain]) => (
          <EraRow key={t} $h={h} $plain={plain}>{t}</EraRow>
        ))}
      </EraTable>
    </Annotated>
  );
}

function LocationFields() {
  return (
    <Fields $cols={3} $mt={6}>
      <Field>
        <FieldLabel>Postcode</FieldLabel>
        <Control $ml={1} $w={450}>
          <Hint>MK</Hint>
        </Control>
        <Suggestions>
          <Suggestion $h={43} $pt={17} $line>
            MK427EF<Owner>Steve Britchford</Owner>
          </Suggestion>
          <Suggestion $h={36} $pt={9}>
            MK427EF<Owner>Stephen Britchford</Owner>
          </Suggestion>
        </Suggestions>
      </Field>
      <Field $drop={2}>
        <FieldLabel $track={0.1}>Find Address</FieldLabel>
        <Control $mt={11}>
          <Hint $pt={2}>Other</Hint>
          <Chevron />
        </Control>
      </Field>
      <Field $lift={-1}>
        <FieldLabel $track={0.05}>Please enter full address details here</FieldLabel>
        <Control>
          <Hint>Your Address</Hint>
        </Control>
      </Field>
    </Fields>
  );
}

function MapPanel() {
  return (
    <MapFrame>
      <LocationMap />
      <MapTabs>
        <MapTab $on $w={83}>Map</MapTab>
        <MapTab $w={118}>Satellite</MapTab>
      </MapTabs>
      <ZoomBox>
        <svg width="47" height="96" viewBox="0 0 47 96" stroke="#707070" strokeWidth="4.500">
          <path d="M13 24H34M23.500 13.500V34.500M13 73H34" />
          <path d="M6 48H41" stroke="#e6e6e6" strokeWidth="1" />
        </svg>
      </ZoomBox>
      <GoogleMark>
        {google.map(([ch, c], i) => (
          <GoogleLetter key={i} $c={c}>{ch}</GoogleLetter>
        ))}
      </GoogleMark>
      <MapCredits>
        <span>Map data ©2020</span>
        <span>Terms of Use</span>
        <span>Report a map error</span>
      </MapCredits>
    </MapFrame>
  );
}

function TitleStep() {
  return (
    <>
      <StepLine $mt={54}>
        Step 4:
        <StepText $ml={13}>This is the title we suggest. To alter it, do so here</StepText>
      </StepLine>
      <Paragraph $mt={37} $c="#757575">
        Here is what the heading will look like. It auto populates based upon the Size, Property Type, Style, Town &amp; Country.
      </Paragraph>
      <Control $mt={16} $ml={3} $w={1410} $h={49} $pl={14} $pr={16}>
        <Filled>5 Bed Detached house, Thatched, Bedford UK</Filled>
        <Counter $c="#757575">2</Counter>
      </Control>
      <DevNote $mt={27} $ml={15} $w={461} $h={61} $pad="11px 0 0 9px">
        {"Dev.  I have also removed the box from here as it 'goes'\nnowhere.  It is not included on the Specific Property Page design"}
      </DevNote>
      <Paragraph $mt={45} $c="#404040">
        Select as many attributes as possible <PaintText>(Max. 18)</PaintText>
        to ensure your listing has the greatest exposure on the internet.
      </Paragraph>
      <LimitNote>(Up to 30 characters/spaces per attribute)</LimitNote>
      <Chips>
        <Chip $w={147} $mr={18}>20’ x 20’ lounge</Chip>
        <Chip $w={156} $mr={17}>Bespoke Kitchen</Chip>
        <Chip $w={128} $mr={22}>Granny Annex</Chip>
        <Chip $w={135} $mr={20}>Koi Carp Pond</Chip>
        <Chip $w={121} $mr={0}>Conservatory</Chip>
      </Chips>
      <Control $mt={25} $w={1412} $h={50} $pl={19} $pr={14}>
        <Hint>Add attribute/keyword</Hint>
        <Counter $c="#333">20</Counter>
      </Control>
      <Actions>
        <Button $primary>SAVE</Button>
        <Button>BACK</Button>
      </Actions>
    </>
  );
}

function SiteFooter() {
  return (
    <>
      <Footer>
        <SocialBar>
          <SocialCell $pl={62}>We’re confident we’ve provided all the best for you. Stay connected with us</SocialCell>
          <SocialCell $line $pl={173}>
            <SocialIcon $w={24} $c="#4a66b5"><FaFacebookF size={26} /></SocialIcon>
          </SocialCell>
          <SocialCell $line $pl={1}>
            <SocialIcon $w={110} $c="#47a2f5"><FaTwitter size={24} /></SocialIcon>
            <SocialIcon $w={111} $c="#2b2b2b"><FaInstagram size={26} /></SocialIcon>
            <SocialIcon $w={109} $c="#2b72b8"><FaLinkedinIn size={25} /></SocialIcon>
            <SocialIcon $w={34} $c="#4a66f5"><FaBehance size={32} /></SocialIcon>
          </SocialCell>
        </SocialBar>
        <FooterCols>
          {footerCols.map((c) => (
            <FooterCol key={c.title} $w={c.w}>
              <FooterHeading>{c.title}</FooterHeading>
              <FooterLinks $mt={c.mt}>
                {c.links.map((l) => (
                  <li key={l}>{l}</li>
                ))}
              </FooterLinks>
            </FooterCol>
          ))}
        </FooterCols>
      </Footer>
      <BottomBar>
        <Copyright>Copyright 2019 iwont Ltd. All rights reserved.</Copyright>
        <Cards>
          <CardTile label="VISA" size={15} len={37} />
          <CardTile label="PayPal" size={10} len={31} ml={15} />
          <CardTile label="amazon" size={9.5} len={34} smile ml={14} />
          <CardSvg $ml={15} $mt={1} width="45" height="29" viewBox="0 0 45 29">
            <rect width="45" height="29" rx="1.500" fill="#6a6a6a" />
            <circle cx="15" cy="14.500" r="11.500" fill="#191919" />
            <circle cx="30" cy="14.500" r="11.500" fill="#191919" />
            <rect x="7" y="10" width="31" height="9.500" fill="#191919" />
            <text x="22.500" y="18" textAnchor="middle" textLength="30" lengthAdjust="spacingAndGlyphs" fontFamily="'Open Sans', sans-serif" fontStyle="italic" fontWeight="700" fontSize="9" fill="#8a8a8a">
              Maestro
            </text>
          </CardSvg>
          <CardSvg $ml={16} $mt={2} width="41" height="29" viewBox="0 0 41 29">
            <rect x="1" y="1" width="39" height="27" rx="4" fill="none" stroke="#6a6a6a" strokeWidth="2" />
            <text x="20.500" y="19" textAnchor="middle" textLength="34" lengthAdjust="spacingAndGlyphs" fontFamily="'Liberation Sans', sans-serif" fontWeight="700" fontSize="12.500" fill="#7c7c7c">
              AMEX
            </text>
          </CardSvg>
        </Cards>
      </BottomBar>
    </>
  );
}

export default function App() {
  return (
    <Canvas>
      <GlobalStyle />
      <Page>
        <Header />
        <Crumbs>
          <BackLink>
            <svg width="14" height="10" viewBox="0 0 14 10" fill="none" stroke={RED} strokeWidth="2">
              <path d="M14 5H1.500M6 .8L1.500 5L6 9.200" />
            </svg>
            Back
          </BackLink>
          <span>
            Home / My Account / <Current>Ad-Builder - Residential Property</Current>
          </span>
        </Crumbs>
        <Body>
          <Sidebar />
          <Main>
            <Progress>
              <ProgressFill />
            </Progress>
            <TitleRow>
              <TitleLogo>
                <Logo width={131} height={66} />
              </TitleLogo>
              <Title>
                Ad-Builder
                <Tagline>
                  Your easy to use Listing Tool for <RedText>Residential Property</RedText>
                </Tagline>
              </Title>
            </TitleRow>
            <StepLine $mt={20} $ml={2}>
              Step 1:
              <StepText>Select the product or service that you wish to advertise</StepText>
            </StepLine>
            <PropertyDetails />
            <LocationFields />
            <PinRow>
              <PinGlyph />
              Move the pin to help your client find your exact location.
            </PinRow>
            <MapPanel />
            <TitleStep />
            <Arrow x={-102} y={470} length={92} left />
            <Arrow x={614} y={473} length={351} />
            <Arrow x={926} y={632} length={356} />
          </Main>
        </Body>
        <SiteFooter />
      </Page>
      <StrayDot />
    </Canvas>
  );
}
